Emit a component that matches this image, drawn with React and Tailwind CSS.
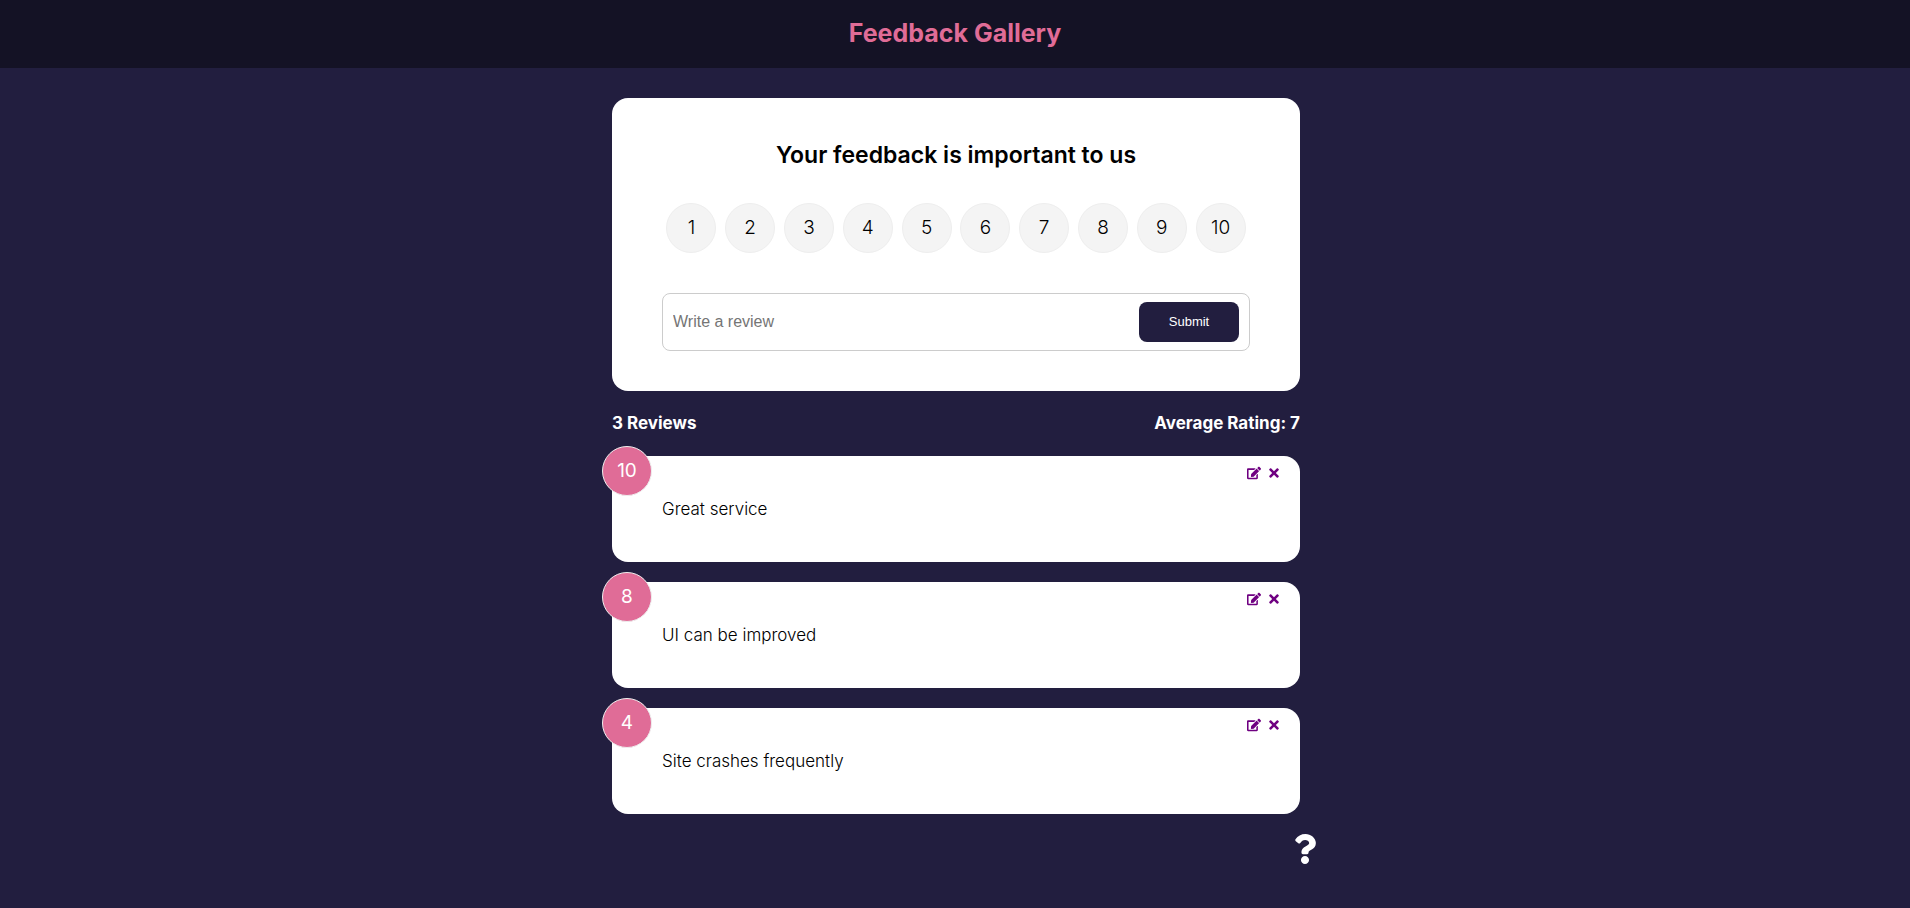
import { FaEdit, FaTimes, FaQuestion } from "react-icons/fa";

const ratings = [1, 2, 3, 4, 5, 6, 7, 8, 9, 10];

const reviews = [
  { id: 1, rating: 10, text: "Great service" },
  { id: 2, rating: 8, text: "UI can be improved" },
  { id: 3, rating: 4, text: "Site crashes frequently" },
];

function Header() {
  return (
    <header className="flex h-[68px] items-center justify-center bg-[#141225] pb-0.5">
      <h1 className="text-[25px] leading-8 font-bold text-[#e06c97]">Feedback Gallery</h1>
    </header>
  );
}

function FeedbackForm() {
  return (
    <section className="rounded-2xl bg-white px-[50px] py-10">
      <form onSubmit={(e) => e.preventDefault()}>
        <h2 className="text-center text-[23px] leading-[34px] font-semibold text-black">
          Your feedback is important to us
        </h2>
        <div role="radiogroup" aria-label="Rating" className="mt-[31px] flex justify-around">
          {ratings.map((n) => (
            <label
              key={n}
              className="relative flex size-[50px] cursor-pointer items-center justify-center rounded-full border border-[#eeeeee] bg-[#f4f4f4] text-[19px] font-light text-black"
            >
              <input
                type="radio"
                name="rating"
                value={n}
                className="absolute inset-0 cursor-pointer appearance-none rounded-full"
              />
              {n}
            </label>
          ))}
        </div>
        <div className="mt-10 flex items-center rounded-lg border border-[#cccccc] px-[10px] py-2">
          <input
            type="text"
            aria-label="Review"
            placeholder="Write a review"
            className="min-w-0 grow font-['Liberation_Sans',Arial,sans-serif] text-base text-black outline-none placeholder:text-[#757575]"
          />
          <button
            type="submit"
            className="h-10 w-[100px] rounded-lg bg-[#221e3f] font-['Liberation_Sans',Arial,sans-serif] text-[13px] text-white"
          >
            Submit
          </button>
        </div>
      </form>
    </section>
  );
}

function ReviewCard({ review }) {
  return (
    <li className="relative rounded-2xl bg-white px-[50px] py-10">
      <div className="absolute -top-[10px] -left-[10px] flex size-[50px] items-center justify-center rounded-full border border-[#eeeeee] bg-[#e06c97] text-[19px] text-white">
        {review.rating}
      </div>
      <div className="absolute top-[10px] right-[21px] flex gap-2 text-[14px] text-[#6f0081]">
        <button type="button" aria-label="Edit review">
          <FaEdit />
        </button>
        <button type="button" aria-label="Delete review">
          <FaTimes className="w-[10px]" />
        </button>
      </div>
      <p className="text-[17px] leading-[26px] font-light text-black">{review.text}</p>
    </li>
  );
}

export default function App() {
  return (
    <div className="min-h-screen bg-[#221e3f] font-['Inter','Open_Sans',sans-serif]">
      <Header />
      <div className="pt-[30px] pl-0.5">
        <main className="mx-auto w-full max-w-[688px]">
          <FeedbackForm />
          <div className="my-5 flex items-center justify-between text-[17px] leading-[25px] font-bold text-white">
            <p>3 Reviews</p>
            <p>Average Rating: 7</p>
          </div>
          <ul className="flex flex-col gap-5">
            {reviews.map((review) => (
              <ReviewCard key={review.id} review={review} />
            ))}
          </ul>
          <div className="-mr-5 mt-5 flex justify-end">
            <a href="#about" aria-label="About" className="text-[30px] text-white">
              <FaQuestion />
            </a>
          </div>
        </main>
      </div>
    </div>
  );
}
